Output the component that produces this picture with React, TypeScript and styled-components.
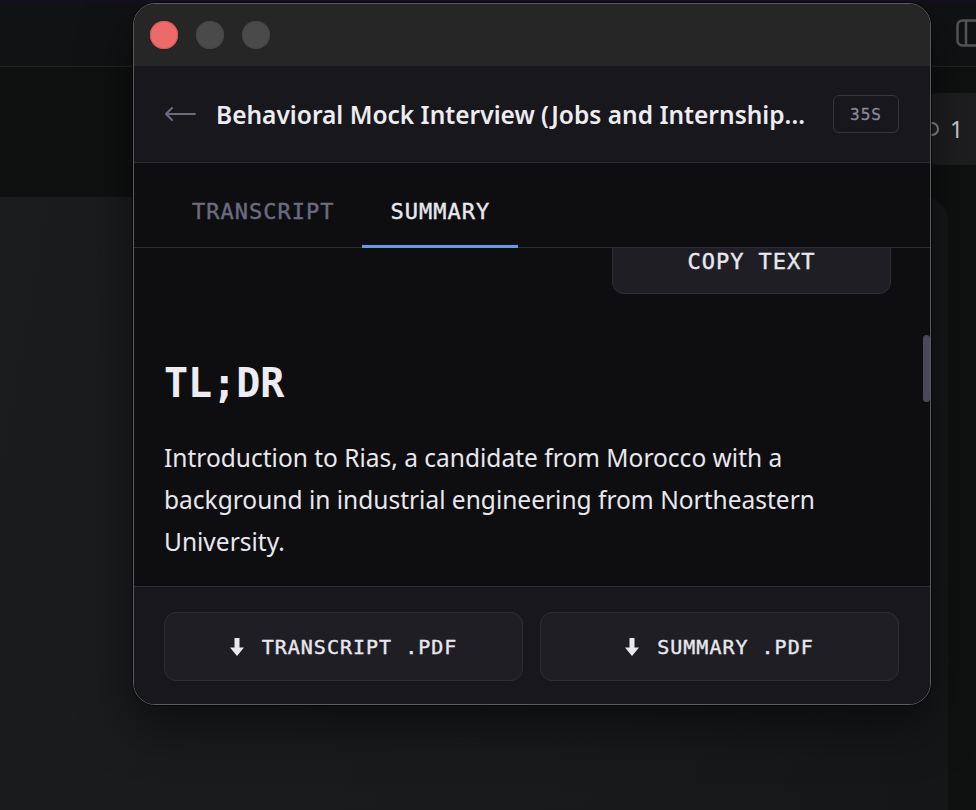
import React from 'react';
import styled, { createGlobalStyle } from 'styled-components';

const mono = `'DejaVu Sans Mono', 'Liberation Mono', monospace`;
const sans = `'Noto Sans', 'Open Sans', sans-serif`;

const colors = {
  desk: '#0f1010',
  topBar: '#111213',
  deskLine: '#222326',
  titleBar: '#262626',
  header: '#18171c',
  body: '#0e0e10',
  line: '#2d2c37',
  button: '#1f1e24',
  buttonLine: '#2f2e38',
  text: '#e8e8ee',
  dim: '#6b6b80',
  badge: '#8b8a9b',
  blue: '#5c9df2',
};

const GlobalStyle = createGlobalStyle`
  html, body {
    margin: 0;
    padding: 0;
    background: ${colors.desk};
  }
  body {
    font-family: ${sans};
    overflow: hidden;
  }
  * {
    box-sizing: border-box;
  }
`;

/* background app */

const Desktop = styled.div`
  position: relative;
  width: 976px;
  height: 810px;
  overflow: hidden;
  display: flex;
  flex-direction: column;
  border-top: 2px solid #160e20;
  background: ${colors.desk};
`;

const TopBar = styled.div`
  height: 65px;
  flex: 0 0 65px;
  display: flex;
  align-items: center;
  justify-content: flex-end;
  background: ${colors.topBar};
  border-bottom: 1px solid ${colors.deskLine};
`;

const SidebarIcon = styled.svg`
  margin-right: -12px;
  margin-top: -2px;
`;

const Band = styled.div`
  height: 130px;
  flex: 0 0 130px;
  display: flex;
  justify-content: flex-end;
  align-items: flex-start;
  padding-top: 26px;
`;

const Pill = styled.div`
  width: 112px;
  height: 72px;
  margin-right: -40px;
  border-radius: 36px;
  background: #1e1e20;
  display: flex;
  align-items: center;
  gap: 10px;
  padding-left: 20px;
  color: #cfcfd2;
  font-size: 23px;
`;

const Card = styled.div`
  flex: 1;
  margin-right: 28px;
  border-top-right-radius: 24px;
  background: linear-gradient(100deg, #1b1c1e 0%, #18191b 70%, #151617 100%);
`;

/* floating window */

const Window = styled.div`
  position: absolute;
  top: 1px;
  left: 133px;
  width: 798px;
  height: 702px;
  display: flex;
  flex-direction: column;
  border: 1px solid #5c5c60;
  border-radius: 22px;
  overflow: hidden;
  background: ${colors.body};
  box-shadow: 0 0 0 1px rgba(0, 0, 0, 0.6), 0 20px 50px rgba(0, 0, 0, 0.5);
`;

const TitleBar = styled.div`
  height: 62px;
  flex: 0 0 62px;
  display: flex;
  align-items: center;
  gap: 18px;
  padding-left: 16px;
  background: ${colors.titleBar};
`;

const Light = styled.span<{ $close?: boolean }>`
  width: 28px;
  height: 28px;
  border-radius: 50%;
  background: ${p => (p.$close ? '#ed6a6a' : '#4a4a4a')};
  box-shadow: inset 0 0 0 1px ${p => (p.$close ? '#d95858' : '#454545')};
`;

const Header = styled.div`
  height: 97px;
  flex: 0 0 97px;
  display: flex;
  align-items: center;
  padding: 0 31px 0 30px;
  background: ${colors.header};
  border-bottom: 1px solid ${colors.line};
`;

const BackArrow = styled.svg`
  flex: 0 0 auto;
  margin-right: 20px;
`;

const Title = styled.h1`
  flex: 1;
  min-width: 0;
  margin: 0;
  font-family: ${sans};
  font-size: 24.5px;
  font-weight: 600;
  color: #ececf1;
  white-space: nowrap;
  overflow: hidden;
`;

const Badge = styled.span`
  flex: 0 0 auto;
  height: 38px;
  display: flex;
  align-items: center;
  padding: 0 16px;
  margin-left: 24px;
  border: 1px solid #35343f;
  border-radius: 6px;
  font-family: ${mono};
  font-size: 16px;
  letter-spacing: 1px;
  color: ${colors.badge};
  -webkit-text-stroke: 0.3px ${colors.badge};
`;

const Tabs = styled.div`
  height: 85px;
  flex: 0 0 85px;
  display: flex;
  padding-left: 30px;
  border-bottom: 1px solid ${colors.line};
  background: ${colors.body};
`;

const Tab = styled.div<{ $active?: boolean }>`
  position: relative;
  display: flex;
  align-items: center;
  padding: 12px 28px 0;
  font-family: ${mono};
  font-size: 22px;
  letter-spacing: 1px;
  color: ${p => (p.$active ? colors.text : colors.dim)};
  -webkit-text-stroke: 0.4px ${p => (p.$active ? colors.text : colors.dim)};

  &::after {
    content: '';
    position: absolute;
    left: 0;
    right: 0;
    bottom: -1px;
    height: 3px;
    background: ${p => (p.$active ? colors.blue : 'transparent')};
  }
`;

const Content = styled.div`
  position: relative;
  flex: 1;
  overflow: hidden;
  background: ${colors.body};
`;

const Scrolled = styled.div`
  padding: 0 39px 0 30px;
`;

const CopyRow = styled.div`
  display: flex;
  justify-content: flex-end;
  margin-top: -20px;
`;

const CopyButton = styled.button`
  width: 279px;
  height: 66px;
  border: 1px solid ${colors.buttonLine};
  border-radius: 12px;
  background: ${colors.button};
  color: ${colors.text};
  font-family: ${mono};
  font-size: 22px;
  letter-spacing: 1px;
  -webkit-text-stroke: 0.4px ${colors.text};
`;

const Heading = styled.h2`
  margin: 65px 0 0;
  font-family: ${mono};
  font-size: 40px;
  font-weight: 700;
  line-height: 48px;
  color: #ececf1;
`;

const Para = styled.p`
  margin: 30px 0 0;
  font-family: ${sans};
  font-size: 24.5px;
  line-height: 42px;
  color: ${colors.text};
`;

const Thumb = styled.div`
  position: absolute;
  right: 0;
  top: 87px;
  width: 7px;
  height: 67px;
  border-radius: 4px;
  background: #4b4959;
`;

const Footer = styled.div`
  height: 118px;
  flex: 0 0 118px;
  display: grid;
  grid-template-columns: 1fr 1fr;
  gap: 17px;
  align-items: start;
  padding: 25px 31px 0 30px;
  background: ${colors.header};
  border-top: 1px solid ${colors.line};
`;

const PdfButton = styled.button`
  height: 69px;
  display: flex;
  align-items: center;
  justify-content: center;
  gap: 18px;
  border: 1px solid ${colors.buttonLine};
  border-radius: 12px;
  background: ${colors.button};
  color: ${colors.text};
  font-family: ${mono};
  font-size: 20px;
  letter-spacing: 1px;
  -webkit-text-stroke: 0.4px ${colors.text};
`;

const DownloadIcon = () => (
  <svg width="14" height="20" viewBox="0 0 14 20">
    <path d="M4.5 1h5v9.5H14L7 19 0 10.5h4.5z" fill={colors.text} />
  </svg>
);

export default function App() {
  return (
    <>
      <GlobalStyle />
      <Desktop>
        <TopBar>
          <SidebarIcon width="32" height="28" viewBox="0 0 32 28">
            <rect x="1.5" y="1.5" width="29" height="25" rx="5" fill="none" stroke="#56565a" strokeWidth="2.5" />
            <line x1="10" y1="2" x2="10" y2="26" stroke="#56565a" strokeWidth="2.5" />
          </SidebarIcon>
        </TopBar>
        <Band>
          <Pill>
            <svg width="16" height="16" viewBox="0 0 16 16">
              <circle cx="8" cy="8" r="6" fill="none" stroke="#8a8a8e" strokeWidth="2" />
            </svg>
            1
          </Pill>
        </Band>
        <Card />

        <Window>
          <TitleBar>
            <Light $close />
            <Light />
            <Light />
          </TitleBar>

          <Header>
            <BackArrow width="32" height="16" viewBox="0 0 32 16">
              <path d="M31 8H2M8 2L2 8l6 6" fill="none" stroke={colors.dim} strokeWidth="2" strokeLinecap="round" strokeLinejoin="round" />
            </BackArrow>
            <Title>Behavioral Mock Interview (Jobs and Internship...</Title>
            <Badge>35S</Badge>
          </Header>

          <Tabs>
            <Tab>TRANSCRIPT</Tab>
            <Tab $active>SUMMARY</Tab>
          </Tabs>

          <Content>
            <Scrolled>
              <CopyRow>
                <CopyButton>COPY TEXT</CopyButton>
              </CopyRow>
              <Heading>TL;DR</Heading>
              <Para>
                Introduction to Rias, a candidate from Morocco with a background in industrial engineering from
                Northeastern University.
              </Para>
            </Scrolled>
            <Thumb />
          </Content>

          <Footer>
            <PdfButton>
              <DownloadIcon />
              TRANSCRIPT .PDF
            </PdfButton>
            <PdfButton>
              <DownloadIcon />
              SUMMARY .PDF
            </PdfButton>
          </Footer>
        </Window>
      </Desktop>
    </>
  );
}
